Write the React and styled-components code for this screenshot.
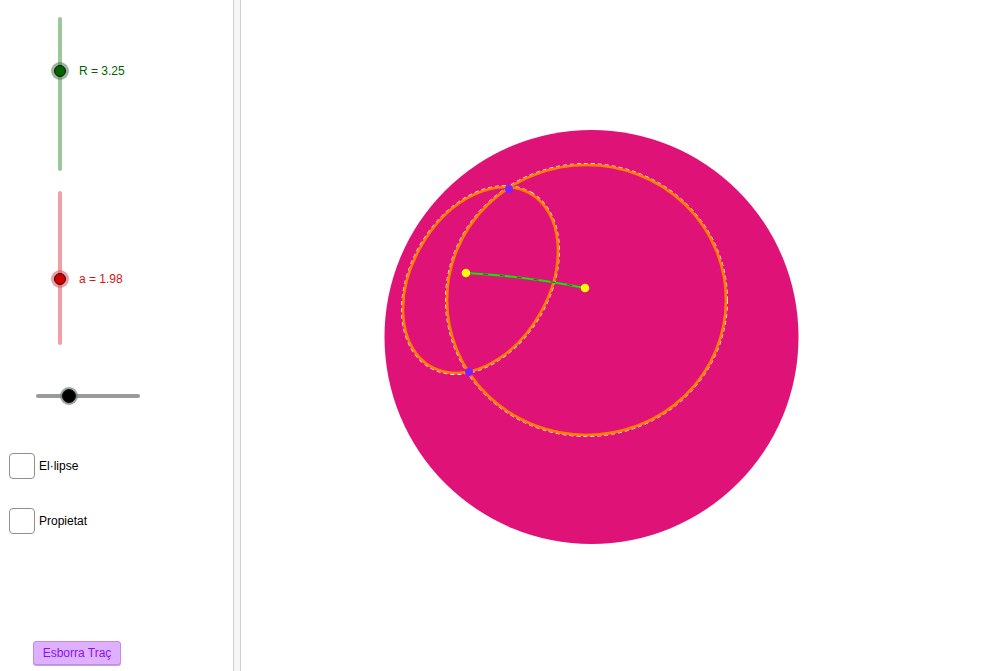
import React from "react";
import styled, { createGlobalStyle } from "styled-components";

const Global = createGlobalStyle`
  html, body { margin: 0; padding: 0; background: #fff; overflow: hidden; }
  body { font-family: "Liberation Sans", Arial, sans-serif; }
  #root { width: 1002px; height: 671px; }
`;

const Page = styled.div`
  display: flex;
  width: 1002px;
  height: 671px;
`;

const Panel = styled.div`
  width: 233px;
  height: 671px;
  display: flex;
  flex-direction: column;
  flex-shrink: 0;
`;

const Divider = styled.div`
  width: 6px;
  height: 671px;
  background: #f6f6f6;
  border-left: 1px solid #d0d0d0;
  border-right: 1px solid #d0d0d0;
  flex-shrink: 0;
`;

const Canvas = styled.div`
  flex: 1;
  height: 671px;
  svg { display: block; }
`;

const VSliderBox = styled.div`
  position: relative;
  height: 154px;
  margin-top: ${(p) => p.$mt}px;
  padding-left: 58px;
`;

const VTrack = styled.div`
  width: 4px;
  height: 154px;
  border-radius: 2px;
  background: ${(p) => p.$color};
`;

const KnobGroup = styled.div`
  position: absolute;
  left: 51px;
  display: flex;
  align-items: center;
  gap: 10px;
  transform: translateY(-50%);
`;

const Knob = styled.div`
  width: ${(p) => p.$halo}px;
  height: ${(p) => p.$halo}px;
  border-radius: 50%;
  background: ${(p) => p.$haloColor};
  display: flex;
  align-items: center;
  justify-content: center;
  &::after {
    content: "";
    width: ${(p) => p.$dot}px;
    height: ${(p) => p.$dot}px;
    box-sizing: border-box;
    border-radius: 50%;
    background: ${(p) => p.$color};
    border: 1px solid #111;
  }
`;

const SliderLabel = styled.span`
  font-size: 12px;
  color: ${(p) => p.$color};
  white-space: nowrap;
  line-height: 14px;
`;

const HSliderBox = styled.div`
  position: relative;
  margin-top: 49px;
  margin-left: 36px;
  width: 104px;
  height: 4px;
`;

const HTrack = styled.div`
  width: 104px;
  height: 4px;
  border-radius: 2px;
  background: #9a9a9a;
`;

const HKnob = styled(Knob)`
  position: absolute;
  top: 2px;
  transform: translate(-50%, -50%);
`;

const CheckRow = styled.label`
  display: flex;
  align-items: center;
  gap: 4px;
  margin-top: ${(p) => p.$mt}px;
  margin-left: 9px;
  font-size: 12px;
  color: #000;
`;

const Box = styled.span`
  width: 26px;
  height: 26px;
  box-sizing: border-box;
  border: 1.5px solid #8f8f8f;
  border-radius: 4px;
  background: #fff;
`;

const Button = styled.button`
  margin-top: 107px;
  margin-left: 33px;
  width: 88px;
  height: 24px;
  box-sizing: border-box;
  border: 1px solid #c48ce0;
  border-radius: 3px;
  background: #dfb0ff;
  color: #8a10ee;
  font-family: "Liberation Sans", Arial, sans-serif;
  font-size: 12px;
  padding: 0;
  box-shadow: 0 1px 0 #c8a0e0;
`;

function VSlider({ mt, trackColor, pos, knob, label, labelColor }) {
  return (
    <VSliderBox $mt={mt}>
      <VTrack $color={trackColor} />
      <KnobGroup style={{ top: pos }}>
        <Knob {...knob} />
        <SliderLabel $color={labelColor}>{label}</SliderLabel>
      </KnobGroup>
    </VSliderBox>
  );
}

function Geometry() {
  const smallRot = -60;
  return (
    <svg width="761" height="671" viewBox="241 0 761 671">
      <circle cx="591.5" cy="337" r="207" fill="#df1278" />
      {/* traces */}
      <ellipse cx="586.5" cy="300" rx="141" ry="136.5" fill="none" stroke="#ffffff" strokeWidth="1" strokeDasharray="4 3" />
      <ellipse
        cx="480.5" cy="280" rx="101.3" ry="69.9"
        transform={`rotate(${smallRot} 480.5 280)`}
        fill="none" stroke="#ffffff" strokeWidth="1" strokeDasharray="4 3"
      />
      <ellipse cx="586.5" cy="300" rx="139.5" ry="135" fill="none" stroke="#ff8000" strokeWidth="2.6" />
      <ellipse
        cx="480.5" cy="280" rx="99.8" ry="68.4"
        transform={`rotate(${smallRot} 480.5 280)`}
        fill="none" stroke="#ff8000" strokeWidth="2.6"
      />
      <path d="M466 273 Q 525 276 585 288" fill="none" stroke="#00ee00" strokeWidth="2.2" />
      <path d="M466 273 Q 525 276 585 288" fill="none" stroke="#5a1a30" strokeWidth="0.7" strokeDasharray="5 12" />
      <circle cx="466" cy="273" r="4.3" fill="#ffff00" />
      <circle cx="585" cy="288" r="4.3" fill="#ffff00" />
      <circle cx="509" cy="189" r="4" fill="#7f1fff" />
      <circle cx="469" cy="372" r="4" fill="#7f1fff" />
    </svg>
  );
}

export default function App() {
  return (
    <>
      <Global />
      <Page>
        <Panel>
          <VSlider
            mt={17}
            trackColor="#9cc69c"
            pos={54}
            knob={{ $halo: 18, $haloColor: "rgba(80,120,80,0.55)", $dot: 12, $color: "#006400" }}
            label="R = 3.25"
            labelColor="#006400"
          />
          <VSlider
            mt={20}
            trackColor="#f0a0a4"
            pos={88}
            knob={{ $halo: 18, $haloColor: "rgba(230,90,100,0.6)", $dot: 12, $color: "#d40000" }}
            label="a = 1.98"
            labelColor="#dd1111"
          />
          <HSliderBox>
            <HTrack />
            <HKnob $halo={18} $haloColor="rgba(110,130,110,0.7)" $dot={14} $color="#000" style={{ left: 33 }} />
          </HSliderBox>
          <CheckRow $mt={55}>
            <Box />
            El·lipse
          </CheckRow>
          <CheckRow $mt={29}>
            <Box />
            Propietat
          </CheckRow>
          <Button>Esborra Traç</Button>
        </Panel>
        <Divider />
        <Canvas>
          <Geometry />
        </Canvas>
      </Page>
    </>
  );
}
